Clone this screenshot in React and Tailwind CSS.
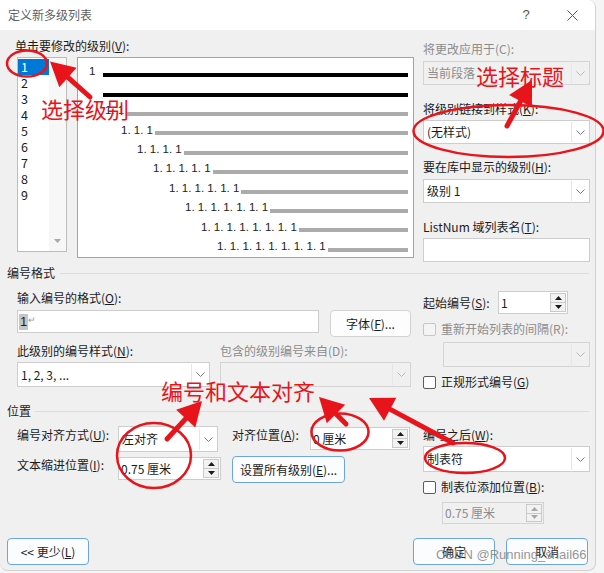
import React from "react";

const F = "font-['Microsoft_YaHei_UI','Noto_Sans_CJK_SC',sans-serif]";

function Chevron({ disabled }) {
  return (
    <div className="w-[17px] h-full flex items-center justify-center border-l border-[#e6e6e6]">
      <svg width="9" height="5" viewBox="0 0 9 5">
        <path d="M0.5 0.5 L4.5 4.5 L8.5 0.5" fill="none" stroke={disabled ? "#b8b8b8" : "#7a7a7a"} strokeWidth="1" />
      </svg>
    </div>
  );
}

function Select({ cls, text, disabled }) {
  return (
    <div
      className={`flex items-stretch border ${
        disabled ? "border-[#d4d4d4] bg-[#f0f0f0] text-[#8c8c8c]" : "border-[#cdcdcd] bg-white text-[#1b1b1b]"
      } ${cls}`}
    >
      <div className="flex-1 flex items-center pl-[3px] whitespace-nowrap overflow-hidden">{text}</div>
      <div className="py-[1px] pr-[1px] flex">
        <Chevron disabled={disabled} />
      </div>
    </div>
  );
}

function Tri({ up, color }) {
  return (
    <svg width="7" height="4" viewBox="0 0 7 4">
      {up ? <path d="M0 4 L3.5 0 L7 4 Z" fill={color} /> : <path d="M0 0 L3.5 4 L7 0 Z" fill={color} />}
    </svg>
  );
}

function Spin({ cls, text, disabled }) {
  const c = disabled ? "#a8a8a8" : "#1b1b1b";
  return (
    <div
      className={`flex border ${
        disabled ? "border-[#d4d4d4] bg-[#f0f0f0] text-[#8c8c8c]" : "border-[#cdcdcd] bg-white text-[#1b1b1b]"
      } ${cls}`}
    >
      <div className="flex-1 flex items-center pl-[2px] whitespace-nowrap overflow-hidden">{text}</div>
      <div className="w-[16px] flex flex-col my-[1px] mr-[1px] border border-[#c9c9c9]">
        <div className="flex-1 flex items-center justify-center bg-[#f2f2f2] border-b border-[#c9c9c9]">
          <Tri up color={c} />
        </div>
        <div className="flex-1 flex items-center justify-center bg-[#f2f2f2]">
          <Tri color={c} />
        </div>
      </div>
    </div>
  );
}

function Check({ disabled }) {
  return (
    <div
      className={`w-[13px] h-[13px] rounded-[2px] border ${
        disabled ? "border-[#c6c6c6] bg-[#f4f4f4]" : "border-[#5c5c5c] bg-white"
      }`}
    />
  );
}

function Btn({ cls, children, blue }) {
  return (
    <div
      className={`flex items-center justify-center rounded-[4px] border ${
        blue ? "border-[#6ea6dc] bg-[#fbfcfd]" : "border-[#d2d2d2] bg-[#fdfdfd]"
      } ${cls}`}
    >
      {children}
    </div>
  );
}

function Heading({ text, gap }) {
  return (
    <div className="h-[16px] flex items-center pl-[7px] pr-[6px]">
      <span className="leading-[16px]">{text}</span>
      <div className={`flex-1 h-px bg-[#dcdcdc] ${gap}`} />
    </div>
  );
}

const levelRows = [
  { ml: "ml-[27px]", t: "1. 1" },
  { ml: "ml-[43px]", t: "1. 1. 1" },
  { ml: "ml-[59px]", t: "1. 1. 1. 1" },
  { ml: "ml-[75px]", t: "1. 1. 1. 1. 1" },
  { ml: "ml-[91px]", t: "1. 1. 1. 1. 1. 1" },
  { ml: "ml-[107px]", t: "1. 1. 1. 1. 1. 1. 1" },
  { ml: "ml-[123px]", t: "1. 1. 1. 1. 1. 1. 1. 1" },
  { ml: "ml-[139px]", t: "1. 1. 1. 1. 1. 1. 1. 1. 1" },
];

function Preview() {
  return (
    <div className="ml-[10px] w-[337px] h-[201px] border border-[#a3a3a3] bg-white pt-[6px] font-['Liberation_Sans',sans-serif] text-[11.5px] text-[#222]">
      <div className="h-[19.4px] flex items-center">
        <span className="ml-[11px] w-[14px] leading-none mb-[3px]">1</span>
        <div className="flex-1 h-[4px] bg-black mt-[3px] mr-[5px]" />
      </div>
      <div className="h-[19.4px] flex items-center">
        <div className="flex-1 h-[4px] bg-black mt-[3px] ml-[25px] mr-[5px]" />
      </div>
      {levelRows.map((r, i) => (
        <div key={i} className="h-[19.4px] flex items-center">
          <span className={`${r.ml} leading-none mb-[3px] whitespace-pre`}>{r.t}</span>
          <div className="flex-1 h-[4px] bg-[#ababab] mt-[3px] ml-[2px] mr-[5px]" />
        </div>
      ))}
    </div>
  );
}

function LevelList() {
  return (
    <div className="ml-[2px] w-[50px] h-[195px] border border-[#bcbcbc] bg-white flex text-[12.5px]">
      <div className="flex-1 pt-[1px]">
        {[1, 2, 3, 4, 5, 6, 7, 8, 9].map((n) => (
          <div
            key={n}
            className={`h-[16px] leading-[16px] pl-[3px] ${n === 1 ? "bg-[#0078d7] text-white" : "text-[#1b1b1b]"}`}
          >
            {n}
          </div>
        ))}
      </div>
      <div className="w-[17px] bg-[#f7f7f7] flex flex-col justify-end items-center pb-[8px]">
        <Tri color="#a8a8a8" />
      </div>
    </div>
  );
}

function arrow(x1, y1, x2, y2, L = 24, W = 13) {
  const dx = x2 - x1;
  const dy = y2 - y1;
  const len = Math.hypot(dx, dy);
  const ux = dx / len;
  const uy = dy / len;
  const bx = x2 - ux * L;
  const by = y2 - uy * L;
  const px = -uy;
  const py = ux;
  return {
    line: [x1, y1, bx + ux * 3, by + uy * 3],
    pts: `${x2},${y2} ${bx + px * W},${by + py * W} ${bx - px * W},${by - py * W}`,
  };
}

function Arrow({ a }) {
  const r = arrow(...a);
  return (
    <g>
      <line x1={r.line[0]} y1={r.line[1]} x2={r.line[2]} y2={r.line[3]} stroke="#e8141c" strokeWidth="5" strokeLinecap="round" />
      <polygon points={r.pts} fill="#e8141c" />
    </g>
  );
}

function Annotations() {
  const red = "#e8141c";
  return (
    <div className="absolute inset-0 pointer-events-none">
      <svg width="604" height="573" className="absolute left-0 top-0">
        <ellipse cx="27" cy="63.5" rx="20" ry="13" fill="none" stroke={red} strokeWidth="2.5" />
        <ellipse cx="508.5" cy="131" rx="95" ry="26" fill="none" stroke={red} strokeWidth="2.5" />
        <ellipse cx="154" cy="455.5" rx="37" ry="32.5" fill="none" stroke={red} strokeWidth="2.5" />
        <ellipse cx="340" cy="432" rx="28.5" ry="18.5" fill="none" stroke={red} strokeWidth="2.5" />
        <ellipse cx="465" cy="458" rx="40" ry="15" fill="none" stroke={red} strokeWidth="2.5" />
        <Arrow a={[90, 97, 50, 61.5]} />
        <Arrow a={[507, 126, 532, 80]} />
        <Arrow a={[167, 439, 202, 401]} />
        <Arrow a={[346, 424, 319, 397]} />
        <Arrow a={[453, 443, 369, 398]} />
      </svg>
      <div className="absolute left-[41px] top-[95px] text-[22px] leading-[26px] text-[#e8141c] whitespace-nowrap">选择级别</div>
      <div className="absolute left-[476px] top-[62px] text-[22px] leading-[26px] text-[#e8141c] whitespace-nowrap">选择标题</div>
      <div className="absolute left-[161px] top-[377px] text-[22px] leading-[26px] text-[#e8141c] whitespace-nowrap">编号和文本对齐</div>
      <div className="absolute left-[436px] top-[547px] font-['Liberation_Sans',sans-serif] text-[13px] leading-[16px] text-[#7a7a7a]/80 whitespace-nowrap">
        CSDN @Running_snail66
      </div>
    </div>
  );
}

export default function App() {
  return (
    <div className={`relative w-[604px] h-[573px] bg-[#f5f5f5] overflow-hidden ${F} text-[12px] text-[#1b1b1b]`}>
      <div className="w-[596px] h-[571px] flex flex-col rounded-tr-[8px] rounded-br-[8px] rounded-bl-[8px] border-r border-b border-[#d0d0d0] overflow-hidden bg-[#f0f0f0]">
        {/* Title bar */}
        <div className="h-[30px] bg-white flex items-center shrink-0">
          <span className="ml-[8px] text-[12px] text-[#5f5f5f]">定义新多级列表</span>
          <span className="ml-auto w-[20px] text-center text-[13px] text-[#555] font-['Liberation_Sans',sans-serif]">?</span>
          <div className="ml-[26px] mr-[13px] w-[20px] flex justify-center">
            <svg width="11" height="11" viewBox="0 0 11 11">
              <path d="M0.5 0.5 L10.5 10.5 M10.5 0.5 L0.5 10.5" stroke="#555" strokeWidth="1" />
            </svg>
          </div>
        </div>

        {/* Top section */}
        <div className="h-[235px] flex shrink-0">
          <div className="w-[423px] pl-[15px] pt-[8px]">
            <div className="h-[16px] leading-[16px]">
              单击要修改的级别(<span className="underline">V</span>):
            </div>
            <div className="flex mt-[3px]">
              <LevelList />
              <Preview />
            </div>
          </div>
          <div className="w-[167px] pt-[11px] flex flex-col">
            <div className="h-[16px] leading-[16px] text-[#8c8c8c]">将更改应用于(C):</div>
            <Select cls="mt-[4px] w-[167px] h-[24px]" text="当前段落" disabled />
            <div className="mt-[16px] h-[16px] leading-[16px]">
              将级别链接到样式(<span className="underline">K</span>):
            </div>
            <Select cls="mt-[3px] w-[167px] h-[24px]" text="(无样式)" />
            <div className="mt-[15px] h-[16px] leading-[16px]">
              要在库中显示的级别(<span className="underline">H</span>):
            </div>
            <Select cls="mt-[4px] w-[167px] h-[24px]" text="级别 1" />
            <div className="mt-[16px] h-[16px] leading-[16px]">
              ListNum 域列表名(<span className="underline">T</span>):
            </div>
            <div className="mt-[3px] w-[167px] h-[24px] bg-white border border-[#cdcdcd]" />
          </div>
        </div>

        <Heading text="编号格式" gap="ml-[5px]" />

        {/* Number format section */}
        <div className="h-[122px] flex shrink-0">
          <div className="w-[423px] pl-[17px] pt-[9px]">
            <div className="h-[16px] leading-[16px]">
              输入编号的格式(<span className="underline">O</span>):
            </div>
            <div className="flex items-start mt-[4px]">
              <div className="w-[302px] h-[23px] bg-white border border-[#cdcdcd] flex items-center pl-[1px]">
                <span className="bg-[#c6c6c6] text-[13px] leading-[16px] px-[1px] font-['Liberation_Sans',sans-serif]">1</span>
                <span className="text-[#9a9a9a] text-[9px] leading-none mb-[4px]">↵</span>
              </div>
              <Btn cls="ml-[11px] w-[81px] h-[27px]">
                字体(<span className="underline">F</span>)...
              </Btn>
            </div>
            <div className="flex mt-[6px] h-[16px] leading-[16px]">
              <div className="w-[203px]">
                此级别的编号样式(<span className="underline">N</span>):
              </div>
              <div className="text-[#8c8c8c]">包含的级别编号来自(D):</div>
            </div>
            <div className="flex mt-[3px]">
              <Select cls="w-[193px] h-[25px]" text="1, 2, 3, ..." />
              <Select cls="ml-[10px] w-[191px] h-[25px]" text="" disabled />
            </div>
          </div>
          <div className="w-[167px] pt-[10px] flex flex-col">
            <div className="flex items-center h-[23px]">
              <div className="w-[75px]">
                起始编号(<span className="underline">S</span>):
              </div>
              <Spin cls="w-[70px] h-[23px]" text="1" />
            </div>
            <div className="flex items-center h-[16px] mt-[7px]">
              <Check disabled />
              <span className="ml-[5px] text-[#8c8c8c]">重新开始列表的间隔(R):</span>
            </div>
            <Select cls="ml-[20px] mt-[5px] w-[147px] h-[25px]" text="" disabled />
            <div className="flex items-center h-[16px] mt-[7px]">
              <Check />
              <span className="ml-[5px]">
                正规形式编号(<span className="underline">G</span>)
              </span>
            </div>
          </div>
        </div>

        <Heading text="位置" gap="ml-[4px]" />

        {/* Position section */}
        <div className="h-[119px] flex shrink-0">
          <div className="w-[423px] pl-[17px] pt-[7px]">
            <div className="flex items-start">
              <div className="w-[101px] mt-[1px] h-[16px] leading-[16px]">
                编号对齐方式(<span className="underline">U</span>):
              </div>
              <Select cls="w-[100px] h-[26px]" text="左对齐" />
              <div className="ml-[14px] w-[78px] mt-[1px] h-[16px] leading-[16px]">
                对齐位置(<span className="underline">A</span>):
              </div>
              <Spin cls="w-[100px] h-[23px] mt-[1px]" text="0 厘米" />
            </div>
            <div className="flex items-start mt-[4px]">
              <div className="w-[101px] mt-[1px] h-[16px] leading-[16px]">
                文本缩进位置(<span className="underline">I</span>):
              </div>
              <Spin cls="w-[103px] h-[23px] mt-[1px]" text="0.75 厘米" />
              <Btn blue cls="ml-[11px] w-[113px] h-[27px]">
                设置所有级别(<span className="underline">E</span>)...
              </Btn>
            </div>
          </div>
          <div className="w-[167px] pt-[8px] flex flex-col">
            <div className="h-[16px] leading-[16px]">
              编号之后(<span className="underline">W</span>):
            </div>
            <Select cls="mt-[3px] w-[167px] h-[26px]" text="制表符" />
            <div className="flex items-center h-[16px] mt-[7px]">
              <Check />
              <span className="ml-[5px]">
                制表位添加位置(<span className="underline">B</span>):
              </span>
            </div>
            <Spin cls="ml-[19px] mt-[7px] w-[102px] h-[22px]" text="0.75 厘米" disabled />
          </div>
        </div>

        {/* Bottom buttons */}
        <div className="h-[27px] flex px-[7px] shrink-0">
          <Btn blue cls="w-[82px] h-[27px]">
            &lt;&lt; 更少(<span className="underline">L</span>)
          </Btn>
          <Btn blue cls="ml-auto w-[82px] h-[27px]">确定</Btn>
          <Btn blue cls="ml-[11px] w-[82px] h-[27px]">取消</Btn>
        </div>
      </div>
      <Annotations />
    </div>
  );
}
